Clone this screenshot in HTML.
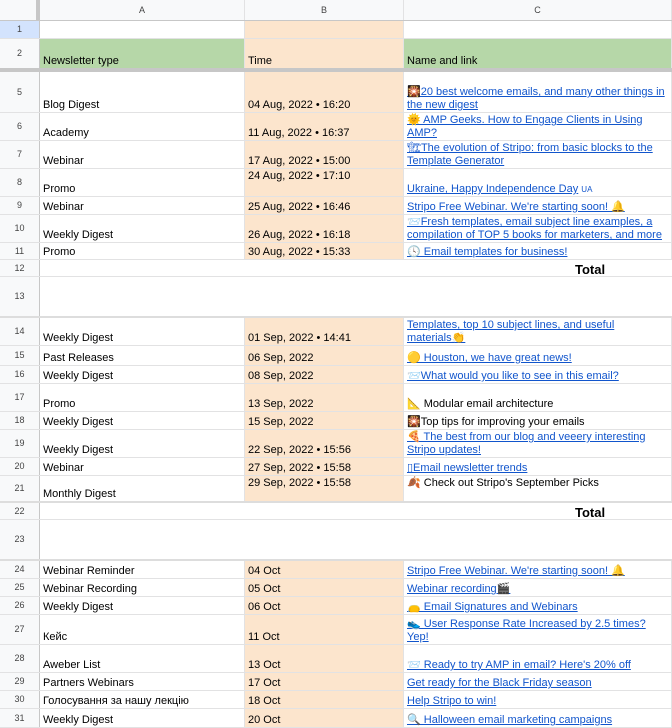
<!DOCTYPE html>
<html><head><meta charset="utf-8"><style>
*{margin:0;padding:0;box-sizing:border-box}
body{width:672px;height:728px;overflow:hidden;background:#fff;font-family:"Liberation Sans","DejaVu Sans",sans-serif;font-size:11px;color:#000;position:relative}
.r{position:absolute;left:0;width:672px;border-bottom:1px solid #e2e2e3}
.c{position:absolute;top:0;bottom:0;display:flex;align-items:flex-end;padding:0 3px 0 3px;overflow:hidden;white-space:nowrap;line-height:13px;border-right:1px solid #e2e2e3}
.h{left:0;width:40px;background:#f8f9fa;justify-content:center;align-items:center;font-size:9px;color:#444;border-right:1px solid #c7c7c7;padding:0}
.a{left:40px;width:205px}
.b{left:245px;width:159px}
.cc{left:404px;width:268px;white-space:normal;padding-right:3px}
.pe{background:#fce5cd}
.g{background:#b6d7a8}
.l{color:#1155cc;text-decoration:underline}
.top{align-items:flex-start;padding-top:1px}
.tot{position:absolute;left:575px;font-weight:bold;font-size:13px}
</style></head><body>
<div class="r" style="top:0;height:21px;background:#f8f9fa;border-bottom:1px solid #c7c7c7">
 <div class="c h" style="border-right:4px solid #c7c7c7"></div>
 <div class="c a" style="justify-content:center;align-items:center;font-size:9px;color:#444">A</div>
 <div class="c b" style="justify-content:center;align-items:center;font-size:9px;color:#444">B</div>
 <div class="c cc" style="justify-content:center;align-items:center;font-size:9px;color:#444">C</div>
</div>
<div class="r" style="top:21px;height:18px"><div class="c h" style="background:#d3e3fd">1</div><div class="c a"></div><div class="c b pe"></div><div class="c cc"></div></div>
<div class="r" style="top:39px;height:33px;border-bottom:4px solid #c7c7c7"><div class="c h">2</div><div class="c a g">Newsletter type</div><div class="c b pe">Time</div><div class="c cc g">Name and link</div></div>

<div class="r" style="top:72px;height:41px"><div class="c h">5</div><div class="c a">Blog Digest</div><div class="c b pe">04 Aug, 2022 • 16:20</div><div class="c cc"><span class="l">🎇20 best welcome emails, and many other things in the new digest</span></div></div>
<div class="r" style="top:113px;height:28px"><div class="c h">6</div><div class="c a">Academy</div><div class="c b pe">11 Aug, 2022 • 16:37</div><div class="c cc"><span class="l">🌞 AMP Geeks. How to Engage Clients in Using AMP?</span></div></div>
<div class="r" style="top:141px;height:28px"><div class="c h">7</div><div class="c a">Webinar</div><div class="c b pe">17 Aug, 2022 • 15:00</div><div class="c cc"><span class="l">🏗The evolution of Stripo: from basic blocks to the Template Generator</span></div></div>
<div class="r" style="top:169px;height:28px"><div class="c h">8</div><div class="c a">Promo</div><div class="c b pe top">24 Aug, 2022 • 17:10</div><div class="c cc"><span class="l">Ukraine, Happy Independence Day</span>&nbsp;<span style="font-size:8px;color:#1155cc">UA</span></div></div>
<div class="r" style="top:197px;height:18px"><div class="c h">9</div><div class="c a">Webinar</div><div class="c b pe">25 Aug, 2022 • 16:46</div><div class="c cc"><span class="l">Stripo Free Webinar. We're starting soon! 🔔</span></div></div>
<div class="r" style="top:215px;height:28px"><div class="c h">10</div><div class="c a">Weekly Digest</div><div class="c b pe">26 Aug, 2022 • 16:18</div><div class="c cc" style="align-items:flex-start;padding-top:1px"><span class="l">📨Fresh templates, email subject line examples, a compilation of TOP 5 books for marketers, and more</span></div></div>
<div class="r" style="top:243px;height:17px"><div class="c h">11</div><div class="c a">Promo</div><div class="c b pe">30 Aug, 2022 • 15:33</div><div class="c cc"><span class="l">🕓 Email templates for business!</span></div></div>
<div class="r" style="top:260px;height:17px"><div class="c h">12</div><span class="tot" style="top:2px">Total</span></div>
<div class="r" style="top:277px;height:41px;border-bottom:2px solid #ddd"><div class="c h">13</div></div>
<div class="r" style="top:318px;height:28px"><div class="c h">14</div><div class="c a">Weekly Digest</div><div class="c b pe">01 Sep, 2022 • 14:41</div><div class="c cc" style="padding-right:50px"><span class="l">Templates, top 10 subject lines, and useful materials👏</span></div></div>
<div class="r" style="top:346px;height:20px"><div class="c h">15</div><div class="c a">Past Releases</div><div class="c b pe">06 Sep, 2022</div><div class="c cc"><span class="l">🟡 Houston, we have great news!</span></div></div>
<div class="r" style="top:366px;height:18px"><div class="c h">16</div><div class="c a">Weekly Digest</div><div class="c b pe">08 Sep, 2022</div><div class="c cc"><span class="l">📨What would you like to see in this email?</span></div></div>
<div class="r" style="top:384px;height:28px"><div class="c h">17</div><div class="c a">Promo</div><div class="c b pe">13 Sep, 2022</div><div class="c cc">📐 Modular email architecture</div></div>
<div class="r" style="top:412px;height:18px"><div class="c h">18</div><div class="c a">Weekly Digest</div><div class="c b pe">15 Sep, 2022</div><div class="c cc">🎇Top tips for improving your emails</div></div>
<div class="r" style="top:430px;height:28px"><div class="c h">19</div><div class="c a">Weekly Digest</div><div class="c b pe">22 Sep, 2022 • 15:56</div><div class="c cc"><span class="l">🍕 The best from our blog and veeery interesting Stripo updates!</span></div></div>
<div class="r" style="top:458px;height:18px"><div class="c h">20</div><div class="c a">Webinar</div><div class="c b pe">27 Sep, 2022 • 15:58</div><div class="c cc"><span class="l">▯Email newsletter trends</span></div></div>
<div class="r" style="top:476px;height:27px;border-bottom:2px solid #ddd"><div class="c h">21</div><div class="c a">Monthly Digest</div><div class="c b pe top">29 Sep, 2022 • 15:58</div><div class="c cc top">🍂 Check out Stripo's September Picks</div></div>
<div class="r" style="top:503px;height:17px"><div class="c h">22</div><span class="tot" style="top:2px">Total</span></div>
<div class="r" style="top:520px;height:41px;border-bottom:2px solid #ddd"><div class="c h">23</div></div>
<div class="r" style="top:561px;height:18px"><div class="c h">24</div><div class="c a">Webinar Reminder</div><div class="c b pe">04 Oct</div><div class="c cc"><span class="l">Stripo Free Webinar. We're starting soon! 🔔</span></div></div>
<div class="r" style="top:579px;height:18px"><div class="c h">25</div><div class="c a">Webinar Recording</div><div class="c b pe">05 Oct</div><div class="c cc"><span class="l">Webinar recording🎬</span></div></div>
<div class="r" style="top:597px;height:18px"><div class="c h">26</div><div class="c a">Weekly Digest</div><div class="c b pe">06 Oct</div><div class="c cc"><span class="l">👝 Email Signatures and Webinars</span></div></div>
<div class="r" style="top:615px;height:30px"><div class="c h">27</div><div class="c a">Кейс</div><div class="c b pe">11 Oct</div><div class="c cc"><span class="l">👟 User Response Rate Increased by 2.5 times? Yep!</span></div></div>
<div class="r" style="top:645px;height:28px"><div class="c h">28</div><div class="c a">Aweber List</div><div class="c b pe">13 Oct</div><div class="c cc"><span class="l">📨 Ready to try AMP in email? Here's 20% off</span></div></div>
<div class="r" style="top:673px;height:18px"><div class="c h">29</div><div class="c a">Partners Webinars</div><div class="c b pe">17 Oct</div><div class="c cc"><span class="l">Get ready for the Black Friday season</span></div></div>
<div class="r" style="top:691px;height:18px"><div class="c h">30</div><div class="c a">Голосування за нашу лекцію</div><div class="c b pe">18 Oct</div><div class="c cc"><span class="l">Help Stripo to win!</span></div></div>
<div class="r" style="top:709px;height:19px"><div class="c h">31</div><div class="c a">Weekly Digest</div><div class="c b pe">20 Oct</div><div class="c cc"><span class="l">🔍 Halloween email marketing campaigns</span></div></div>
</body></html>
